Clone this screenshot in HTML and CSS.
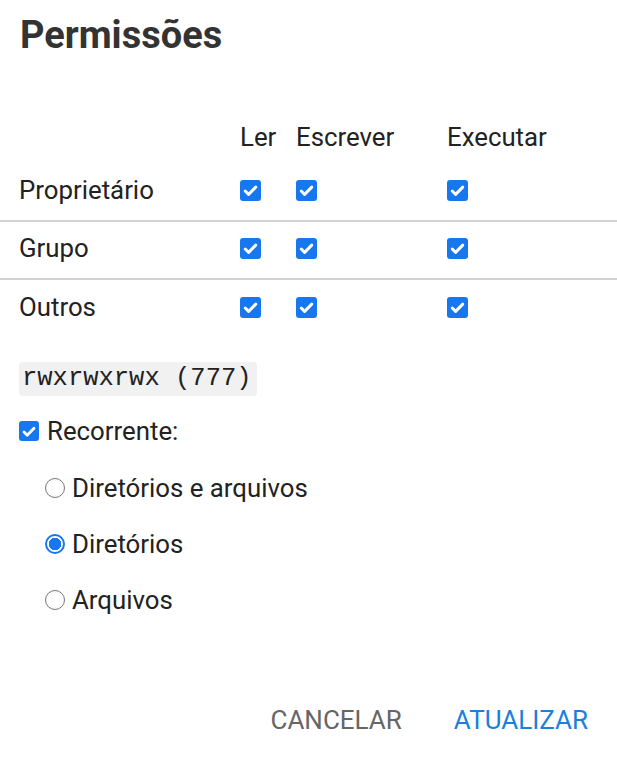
FILE: index.html
```html
<!DOCTYPE html>
<html lang="pt">
<head>
<meta charset="utf-8">
<link rel="stylesheet" href="styles.css">
</head>
<body>
<div class="dialog">
  <h1 class="title">Permissões</h1>
  <div class="perm">
    <div class="row head">
      <div class="label"></div>
      <div class="c1">Ler</div>
      <div class="c2">Escrever</div>
      <div class="c3">Executar</div>
    </div>
    <div class="row line">
      <div class="label">Proprietário</div>
      <div class="c1"><span class="cb"><svg viewBox="0 0 20 20"><path d="M5 10.5l3.2 3.2L15 6.8"/></svg></span></div>
      <div class="c2"><span class="cb"><svg viewBox="0 0 20 20"><path d="M5 10.5l3.2 3.2L15 6.8"/></svg></span></div>
      <div class="c3"><span class="cb"><svg viewBox="0 0 20 20"><path d="M5 10.5l3.2 3.2L15 6.8"/></svg></span></div>
    </div>
    <div class="row line">
      <div class="label">Grupo</div>
      <div class="c1"><span class="cb"><svg viewBox="0 0 20 20"><path d="M5 10.5l3.2 3.2L15 6.8"/></svg></span></div>
      <div class="c2"><span class="cb"><svg viewBox="0 0 20 20"><path d="M5 10.5l3.2 3.2L15 6.8"/></svg></span></div>
      <div class="c3"><span class="cb"><svg viewBox="0 0 20 20"><path d="M5 10.5l3.2 3.2L15 6.8"/></svg></span></div>
    </div>
    <div class="row">
      <div class="label">Outros</div>
      <div class="c1"><span class="cb"><svg viewBox="0 0 20 20"><path d="M5 10.5l3.2 3.2L15 6.8"/></svg></span></div>
      <div class="c2"><span class="cb"><svg viewBox="0 0 20 20"><path d="M5 10.5l3.2 3.2L15 6.8"/></svg></span></div>
      <div class="c3"><span class="cb"><svg viewBox="0 0 20 20"><path d="M5 10.5l3.2 3.2L15 6.8"/></svg></span></div>
    </div>
  </div>
  <div class="code-wrap"><code class="code">rwxrwxrwx (777)</code></div>
  <div class="recur">
    <span class="cb small"><svg viewBox="0 0 20 20"><path d="M5 10.5l3.2 3.2L15 6.8"/></svg></span>
    <span>Recorrente:</span>
  </div>
  <div class="radios">
    <div class="radio-row"><span class="radio"></span><span>Diretórios e arquivos</span></div>
    <div class="radio-row"><span class="radio on"></span><span>Diretórios</span></div>
    <div class="radio-row"><span class="radio"></span><span>Arquivos</span></div>
  </div>
  <div class="actions">
    <button class="btn cancel">CANCELAR</button>
    <button class="btn ok">ATUALIZAR</button>
  </div>
</div>
</body>
</html>
```
FILE: styles.css
```css
* { box-sizing: border-box; }
html, body { margin: 0; padding: 0; background: #fff; }
body {
  font-family: Roboto, "Liberation Sans", sans-serif;
  color: #222;
  font-size: 25.8px;
}
.dialog {
  width: 617px;
  height: 768px;
  position: relative;
}
.title {
  margin: 0;
  padding: 13px 0 0 20px;
  font-size: 38px;
  font-weight: 700;
  color: #333;
  line-height: 44px;
  height: 110px;
}
.perm { display: flex; flex-direction: column; }
.row {
  display: grid;
  grid-template-columns: 221px 56px 151px 1fr;
  align-items: center;
  padding-left: 19px;
  height: 58px;
  padding-bottom: 4px;
}
.row.head { height: 54px; padding-bottom: 0; padding-top: 0; }
.row.line { border-bottom: 2px solid #d2d2d2; }
.label { white-space: nowrap; }
.cb {
  display: inline-flex;
  width: 21px;
  height: 21px;
  border-radius: 3px;
  background: #1677ef;
  vertical-align: middle;
}
.cb svg { width: 21px; height: 21px; }
.cb path { fill: none; stroke: #fff; stroke-width: 2.8; stroke-linecap: round; stroke-linejoin: round; }
.c1, .c2, .c3 { display: flex; align-items: center; }
.code-wrap { padding: 23px 0 0 19px; }
.code {
  display: inline-block;
  font-family: "Liberation Mono", "DejaVu Sans Mono", monospace;
  font-size: 25.5px;
  line-height: 34px;
  height: 34px;
  padding: 0 5px 0 3px;
  background: #f1f1f1;
  border-radius: 4px;
  color: #222;
}
.recur {
  display: flex;
  align-items: center;
  gap: 8px;
  padding: 5px 0 0 19px;
  height: 64px;
}
.cb.small { width: 20px; height: 20px; }
.radios { display: flex; flex-direction: column; padding-left: 45px; }
.radio-row {
  display: flex;
  align-items: center;
  gap: 7px;
  height: 56px;
}
.radio {
  width: 20px;
  height: 20px;
  border-radius: 50%;
  border: 1.5px solid #777;
  background: #fff;
  flex: none;
}
.radio.on {
  border: 2px solid #1677ef;
  background: radial-gradient(circle, #1677ef 0 6px, #fff 6.5px);
}
.actions {
  position: absolute;
  left: 0;
  right: 0;
  bottom: 28px;
  display: flex;
  justify-content: flex-end;
  gap: 52px;
  padding-right: 29px;
}
.btn {
  border: 0;
  background: none;
  padding: 0;
  font-family: Roboto, "Liberation Sans", sans-serif;
  font-size: 26px;
  line-height: 40px;
  cursor: pointer;
}
.cancel { color: #666; }
.ok { color: #1b7fdc; }
```
